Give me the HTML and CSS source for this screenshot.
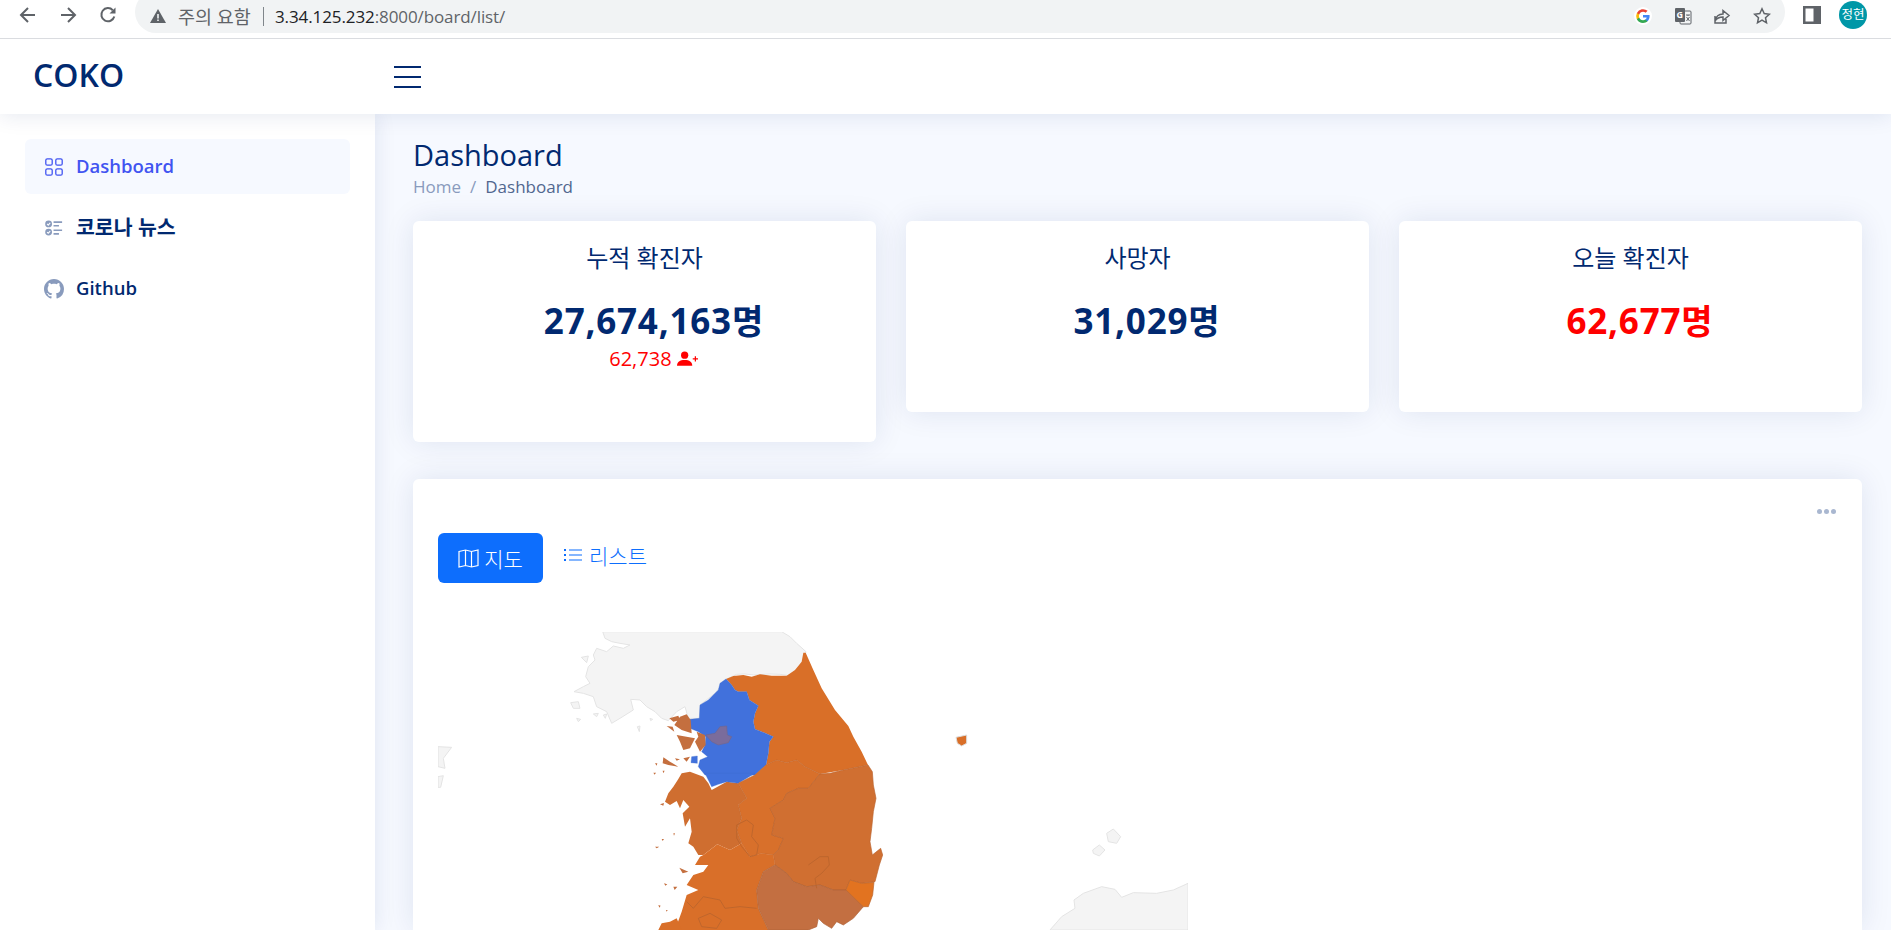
FILE: index.html
```html
<!DOCTYPE html>
<html lang="ko">
<head>
<meta charset="utf-8">
<title>COKO</title>
<link rel="stylesheet" href="styles.css">
</head>
<body>
<div class="browser">
  <div class="nav-icons">
    <svg class="ci" viewBox="0 0 20 20"><path d="M17 10H3.500M10 3l-7 7 7 7"/></svg>
    <svg class="ci" viewBox="0 0 20 20"><path d="M3 10h13.500M10 3l7 7-7 7"/></svg>
    <svg class="ci" viewBox="0 0 20 20"><path d="M16.300 11.500a6.600 6.600 0 1 1-1.500-6.300"/><path class="solid" d="M17.500 2.500v6h-6z"/></svg>
  </div>
  <div class="omnibox">
    <svg class="warn" viewBox="0 0 16 14"><path d="M8 0l8 14H0z"/><path class="warn-mark" d="M7.200 5h1.600v4.500H7.200zM7.200 10.500h1.600V12H7.200z"/></svg>
    <span class="warn-text">주의 요함</span>
    <span class="sep"></span>
    <span class="url"><span class="host">3.34.125.232</span>:8000/board/list/</span>
    <div class="omni-right">
      <svg class="g-logo" viewBox="0 0 18 18"><circle class="g-bg" cx="9" cy="9" r="9"/><path class="g-b" d="M15.600 9.200c0-.5 0-.9-.1-1.300H9v2.500h3.700a3.200 3.200 0 0 1-1.400 2.100v1.700h2.200c1.300-1.200 2.100-3 2.100-5z"/><path class="g-g" d="M9 16c1.900 0 3.400-.6 4.500-1.700l-2.200-1.700c-.6.400-1.400.7-2.300.7-1.800 0-3.300-1.200-3.800-2.800H2.900v1.700A7 7 0 0 0 9 16z"/><path class="g-y" d="M5.200 10.500a4.200 4.200 0 0 1 0-2.900V5.900H2.900a7 7 0 0 0 0 6.300z"/><path class="g-r" d="M9 4.800c1 0 1.900.4 2.600 1l2-2A7 7 0 0 0 2.900 5.900l2.300 1.700C5.700 6 7.200 4.800 9 4.800z"/></svg>
      <svg class="tr" viewBox="0 0 18 18"><rect class="tr-back" x="6" y="4" width="11" height="13" rx="1"/><rect class="tr-front" x="1" y="1" width="10" height="14" rx="1"/><text class="tr-g" x="2.500" y="11">G</text><path class="tr-x" d="M12 8h4M14 8v1M12.500 14l3-4M12.500 10l3 4"/></svg>
      <svg class="ci small" viewBox="0 0 18 18"><path d="M2 9v7h11v-4M2 14c1-5 4-7 8-7V3.500l6 5-6 5V10c-3 0-6 1-8 4z"/></svg>
      <svg class="ci small" viewBox="0 0 18 18"><path d="M9 1.800l2.200 4.800 5.100.6-3.800 3.500 1 5.100L9 13.200 4.500 15.800l1-5.100L1.700 7.200l5.100-.6z"/></svg>
    </div>
  </div>
  <svg class="side-panel" viewBox="0 0 18 18"><path d="M0 0h18v18H0zM2.500 2.500v13h8v-13z"/></svg>
  <div class="avatar">정현</div>
</div>

<header class="topbar">
  <div class="logo">COKO</div>
  <svg class="burger" viewBox="0 0 27 22"><path d="M0 1h27M0 11h27M0 21h27"/></svg>
</header>

<div class="shell">
  <nav class="sidebar">
    <a class="nav-item active">
      <svg class="nav-icon outline" viewBox="0 0 18 18"><rect x=".8" y=".8" width="6.400" height="6.400" rx="1.500"/><rect x="10.800" y=".8" width="6.400" height="6.400" rx="1.500"/><rect x=".8" y="10.800" width="6.400" height="6.400" rx="1.500"/><rect x="10.800" y="10.800" width="6.400" height="6.400" rx="1.500"/></svg>
      <span class="nav-label">Dashboard</span>
    </a>
    <a class="nav-item">
      <svg class="nav-icon checks" viewBox="0 0 20 18"><circle cx="4" cy="4.500" r="3.800"/><circle cx="4" cy="13.500" r="3.800"/><path class="tick" d="M2.300 4.500l1.300 1.300 2.200-2.400M2.300 13.500l1.300 1.300 2.200-2.400"/><path class="bar" d="M9.500 2.500H19M9.500 6.500h6M9.500 11.500H19M9.500 15.500h6"/></svg>
      <span class="nav-label ko">코로나 뉴스</span>
    </a>
    <a class="nav-item">
      <svg class="nav-icon github" viewBox="0 0 16 16"><path d="M8 0C3.580 0 0 3.580 0 8c0 3.540 2.290 6.530 5.470 7.590.4.070.55-.17.55-.38 0-.19-.01-.82-.01-1.490-2.010.37-2.530-.49-2.690-.94-.09-.23-.48-.94-.82-1.130-.28-.15-.68-.52-.01-.53.63-.01 1.080.58 1.230.82.720 1.210 1.870.87 2.330.66.070-.52.280-.87.510-1.070-1.780-.2-3.640-.89-3.640-3.950 0-.87.310-1.590.82-2.150-.08-.2-.36-1.020.08-2.120 0 0 .67-.21 2.200.82.640-.18 1.320-.27 2-.27.680 0 1.360.09 2 .27 1.530-1.040 2.200-.82 2.200-.82.440 1.100.160 1.920.080 2.120.510.56.820 1.270.820 2.150 0 3.070-1.870 3.750-3.650 3.950.290.25.540.73.540 1.480 0 1.070-.01 1.930-.01 2.200 0 .21.150.46.550.38A8.012 8.012 0 0 0 16 8c0-4.420-3.580-8-8-8z"/></svg>
      <span class="nav-label">Github</span>
    </a>
  </nav>

  <main class="main">
    <h1 class="page-title">Dashboard</h1>
    <div class="crumbs"><span class="crumb-home">Home</span><span class="crumb-sep">/</span><span class="crumb-cur">Dashboard</span></div>

    <section class="stats">
      <article class="stat stat-tall">
        <h2 class="stat-title">누적 확진자</h2>
        <div class="stat-value">27,674,163<span class="unit">명</span></div>
        <div class="stat-sub">62,738
          <svg class="person" viewBox="0 0 22 15"><circle cx="8" cy="4" r="3.800"/><path d="M0 15c0-4 3-6 8-6s8 2 8 6z"/><path d="M16.500 7.200h5.500v1.300h-5.500zM18.600 5.100h1.300v5.500h-1.300z"/></svg>
        </div>
      </article>
      <article class="stat">
        <h2 class="stat-title">사망자</h2>
        <div class="stat-value">31,029<span class="unit">명</span></div>
      </article>
      <article class="stat">
        <h2 class="stat-title">오늘 확진자</h2>
        <div class="stat-value red">62,677<span class="unit">명</span></div>
      </article>
    </section>

    <section class="panel">
      <div class="dots"><i></i><i></i><i></i></div>
      <div class="tabs">
        <button class="tab tab-on">
          <svg class="tab-icon" viewBox="0 0 21 19"><path d="M1 2.500L7.500 1l6 1.500L20 1v15.500L13.500 18l-6-1.500L1 18zM7.500 1v15.500M13.500 2.500V18"/></svg>
          지도
        </button>
        <button class="tab">
          <svg class="tab-icon list" viewBox="0 0 18 14"><path d="M5 2h13M5 7h13M5 12h13"/><path class="dot" d="M0 1h2v2H0zM0 6h2v2H0zM0 11h2v2H0z"/></svg>
          리스트
        </button>
      </div>
      <svg class="map" viewBox="438 632 750 298">
        <g transform="translate(420 510) scale(.33333)">
          <path class="land-off" d="M548 365H1085L1110 380L1130 400L1158 425L1145 470L1110 497L1080 493L1050 492L1000 495L975 492L950 493L918 508L885 550L840 585L838 625L805 625L795 590L770 605L745 632L725 625L705 605L680 590L660 570L632 568L640 600L600 625L575 640L560 605L530 590L520 560L490 550L462 545L490 530L510 520L497 500L505 470L525 450L520 435L530 415L560 425L580 408L610 415L630 405L600 400L575 395L555 385Z"/>
          <path class="land-off" d="M452 578L475 575L480 595L460 595ZM484 442L505 438L500 458ZM520 612L535 610L530 620ZM550 615L560 612L556 625ZM470 625L482 628L475 635ZM652 650L660 648L658 665ZM690 625L698 628L692 632ZM54 710L95 712L70 745L75 775L54 770ZM54 800L70 797L62 832H54Z"/>
        </g>
        <g transform="translate(640 620) scale(.33333)">
          <path class="gangwon" d="M258 177L280 168L310 165L335 170L360 163L395 167L440 167L465 150L485 125L490 98L497 98L520 150L545 205L585 270L625 318L640 350L665 395L684 435L610 450L540 462L495 440L470 420L440 428L410 420L378 435L385 400L388 365L400 350L365 335L345 328L340 305L345 280L355 257L328 240L320 215L295 215L285 210L275 195Z"/>
          <path class="gyeonggi" d="M258 177L275 195L285 210L295 215L320 215L328 240L355 257L345 280L340 305L345 328L365 335L400 350L388 365L385 400L378 435L345 465H195L175 440L180 420L203 410L185 395L195 375L197 350L175 335L150 325V298L178 295L180 255L205 240L235 210L240 190Z"/>
          <path class="seoul" d="M197 345L225 340L240 320L260 318L262 345L275 350L265 368L235 375L215 365Z"/>
          <path class="isle" d="M88 295L115 287L120 300L100 305ZM120 290L140 283L152 300L155 340L125 330L103 315ZM170 335L195 345L197 375L180 395L165 365L175 350ZM110 345L165 355L150 385L130 390L120 365ZM80 318L98 320L103 335ZM70 412L90 425L115 440L85 435L68 430ZM105 415L120 418L110 422ZM130 415L150 410L140 425ZM45 430L52 430L50 437ZM40 458L48 458L44 464ZM68 452L74 452L70 460Z"/>
          <path class="gyeonggi" d="M155 410L172 408V430L153 428Z"/>
        </g>
        <g transform="translate(640 775) scale(.33333)">
          <path class="chungnam" d="M75 80L85 55L100 35L115 12L125 -5L150 -10L190 5L205 25L215 45L260 20L295 25L320 70L295 90L305 130L290 165L305 205L270 225L232 208L190 240L175 240L160 215L145 205L155 170L150 130L135 155L128 115L148 95L130 75L120 100L110 78L90 90Z"/>
          <path class="gyeonggi" d="M195 -5L205 15L215 35L235 28L260 20L295 25L345 -5Z"/>
          <path class="chungbuk" d="M295 25L345 0L378 -30L410 -45L440 -37L470 -45L495 -25L540 -3L505 40L475 40L440 55L430 75L390 100L405 130L395 180L430 190L415 225L400 240L365 235L330 245L305 205L290 165L305 130L295 90L320 70Z"/>
          <path class="gyeongbuk" d="M540 -3L570 -5L610 -15L684 -30L697 -10L700 30L708 70L700 110L695 160L690 200L697 240L722 220L728 240L718 270L705 320L665 325L630 315L618 345L580 345L540 330L500 335L460 320L440 295L405 270L400 240L415 225L430 190L395 180L405 130L390 100L430 75L440 55L475 40L505 40Z"/>
          <path class="jeolla" d="M190 240L232 208L270 225L305 205L330 245L365 235L400 240L405 270L370 290L350 345L355 400L385 465H105L125 410L140 360L175 345L140 330L160 300L190 290L205 270L165 270L180 245Z"/>
          <path class="gyeongnam" d="M405 270L440 295L460 320L500 335L540 330L580 345L618 345L660 385L670 395L640 430L610 450L590 440L575 460L550 445L535 430L530 455L505 465H385L355 400L350 345L370 290Z"/>
          <path class="ulsan" d="M630 315L665 325L702 322L698 360L685 395L670 395L618 345Z"/>
          <path class="jeolla" d="M55 465L65 445L90 440L110 430L125 465Z"/>
          <path class="isle" d="M60 88L72 84L70 92ZM100 175L105 175L102 182ZM65 192L72 192L68 198ZM45 215L58 215L50 220ZM118 278L145 290L128 295ZM72 325L82 328L76 332ZM100 335L112 335L104 345ZM55 390L62 392L58 398ZM78 405L83 405L80 410Z"/>
          <path class="seam" d="M140 380L160 400L190 365L240 375L255 400L300 395L350 400M175 430L210 415L245 435L230 460L185 455ZM290 150L320 135L340 150L335 185L355 210L350 240L330 245L305 215L290 190ZM505 270L540 245L565 245L568 270L545 295L525 310L530 340"/>
        </g>
        <g transform="translate(820 610) scale(.33333)">
          <path class="ulleung" d="M408 382L440 375L440 400L425 408L412 400Z"/>
          <path class="land-off" d="M860 670L880 657L902 680L890 700L865 695ZM818 720L838 705L855 720L838 738L820 730ZM690 960L725 920L765 895L762 870L790 850L845 830L885 838L905 862L940 848L1010 850L1060 840L1104 820V960Z"/>
        </g>
      </svg>
    </section>
  </main>
</div>
</body>
</html>
```

FILE: styles.css
```css
* { box-sizing: border-box; }
html, body { margin: 0; height: 930px; overflow: hidden; }
body {
  display: flex;
  flex-direction: column;
  background: #fff;
  font-family: "Open Sans", "Noto Sans CJK KR", sans-serif;
  color: #012970;
}

/* browser chrome */
.browser {
  display: flex;
  align-items: flex-start;
  height: 39px;
  flex: none;
  overflow: hidden;
  border-bottom: 1px solid #dadce0;
  background: #fff;
  position: relative;
  z-index: 3;
}
.nav-icons { display: flex; gap: 20px; padding: 5px 0 0 18px; width: 135px; flex: none; }
.ci { width: 20px; height: 20px; fill: none; stroke: #5f6368; stroke-width: 2; }
.ci .solid { fill: #5f6368; stroke: none; }
.ci.small { width: 18px; height: 18px; stroke-width: 1.500; }
.omnibox {
  display: flex;
  align-items: center;
  width: 1650px;
  height: 42px;
  margin-top: -9px;
  padding: 8px 14px 0 15px;
  border-radius: 21px;
  background: #f1f3f4;
  flex: none;
  font-size: 17px;
  color: #5f6368;
}
.warn { width: 16px; height: 14px; fill: #5f6368; flex: none; }
.warn .warn-mark { fill: #f1f3f4; }
.warn-text { margin-left: 12px; width: 82px; font-size: 18.500px; white-space: nowrap; }
.sep { width: 1px; height: 19px; margin: 0 11px 0 3px; background: #80868b; }
.url { letter-spacing: -.1px; }
.host { color: #202124; }
.omni-right { display: flex; align-items: center; gap: 21.700px; margin-left: auto; }
.g-logo { width: 18px; height: 18px; }
.g-bg { fill: #fff; }
.g-b { fill: #4285f4; }
.g-g { fill: #34a853; }
.g-y { fill: #fbbc05; }
.g-r { fill: #ea4335; }
.tr { width: 18px; height: 18px; }
.tr-back { fill: #f1f3f4; stroke: #5f6368; }
.tr-front { fill: #5f6368; }
.tr-g { fill: #fff; font-size: 9px; font-weight: 700; }
.tr-x { fill: none; stroke: #5f6368; }
.side-panel { width: 18px; height: 18px; margin: 6px 0 0 18px; fill: #5f6368; flex: none; }
.avatar {
  width: 28px;
  height: 28px;
  margin: 1px 0 0 18px;
  border-radius: 50%;
  background: #0097a7;
  color: #fff;
  font-size: 12.500px;
  line-height: 28px;
  text-align: center;
  flex: none;
}

/* header */
.topbar {
  display: flex;
  align-items: center;
  height: 75px;
  flex: none;
  background: #fff;
  box-shadow: 0 2px 20px rgba(1, 41, 112, .1);
  position: relative;
  z-index: 2;
}
.logo { width: 394px; padding: 0 0 4px 33px; font-size: 32px; font-weight: 600; line-height: 1; }
.burger { width: 27px; height: 22px; fill: none; stroke: #012970; stroke-width: 2; }

/* shell */
.shell { display: flex; flex: 1; min-height: 0; }
.sidebar {
  display: flex;
  flex-direction: column;
  gap: 6px;
  width: 375px;
  flex: none;
  padding: 25px;
  background: #fff;
  box-shadow: 0 0 20px rgba(1, 41, 112, .1);
  position: relative;
  z-index: 1;
}
.nav-item {
  display: flex;
  align-items: center;
  gap: 13px;
  height: 55px;
  padding-left: 20px;
  border-radius: 6px;
  font-size: 18.500px;
  font-weight: 600;
  color: #012970;
}
.nav-item.active { background: #f6f9ff; color: #4154f1; }
.nav-label { padding-bottom: 2px; }
.nav-label.ko { padding-bottom: 3px; font-size: 20.500px; font-weight: 700; }
.nav-icon { width: 18px; height: 18px; flex: none; }
.outline { fill: none; stroke: #4154f1; stroke-width: 1.300; }
.checks { fill: #899bbd; }
.checks .tick { fill: none; stroke: #fff; stroke-width: 1.200; }
.checks .bar { fill: none; stroke: #899bbd; stroke-width: 1.800; }
.github { width: 20px; height: 20px; margin-left: -1px; margin-right: -1px; fill: #899bbd; }

/* main */
.main { flex: 1; min-width: 0; padding: 24px 29px 0 38px; background: #f6f9ff; }
.page-title { margin: 0; font-size: 29px; font-weight: 500; line-height: 34px; color: #012970; }
.crumbs { display: flex; gap: 9px; margin-top: 3px; font-size: 17px; line-height: 24px; }
.crumb-home, .crumb-sep { color: #899bbd; }
.crumb-cur { color: #51678f; }
.stats { display: flex; align-items: flex-start; gap: 30px; margin-top: 22px; }
.stat {
  flex: 1;
  height: 191px;
  padding-top: 21px;
  border-radius: 6px;
  background: #fff;
  box-shadow: 0 0 30px rgba(1, 41, 112, .1);
  text-align: center;
}
.stat-tall { height: 221px; }
.stat-title { margin: 0; font-size: 24px; font-weight: 400; line-height: 32px; color: #012970; }
.stat-value { margin-top: 26px; padding-left: 18px; font-size: 35px; font-weight: 700; line-height: 42px; letter-spacing: .8px; color: #012970; }
.stat-value.red, .stat-sub { color: #f00; }
.stat-value .unit { font-size: 34px; letter-spacing: 0; }
.stat-sub { margin-top: 4px; padding-left: 18px; font-size: 20px; line-height: 26px; }
.person { width: 21px; height: 15px; fill: #f00; }

.panel {
  position: relative;
  margin-top: 37px;
  height: 451px;
  padding: 54px 25px 0;
  border-radius: 6px 6px 0 0;
  background: #fff;
  box-shadow: 0 0 30px rgba(1, 41, 112, .1);
}
.dots { position: absolute; top: 30px; right: 26px; display: flex; gap: 2px; }
.dots i { width: 5px; height: 5px; border-radius: 50%; background: #a9b7d0; }
.tabs { display: flex; gap: 8px; }
.tab {
  display: flex;
  align-items: center;
  justify-content: center;
  gap: 5px;
  height: 50px;
  padding: 0 12px;
  border: 0;
  border-radius: 6px;
  background: none;
  font: inherit;
  font-size: 21px;
  font-weight: 300;
  color: #0d6efd;
}
.tab-on { width: 105px; background: #0d6efd; color: #fff; }
.tab:not(.tab-on) { height: 44px; gap: 7px; padding-left: 13px; }
.tab-icon { width: 21px; height: 19px; fill: none; stroke: currentColor; stroke-width: 1.200; }
.tab-icon.list { width: 18px; height: 14px; }
.tab-icon .dot { fill: currentColor; stroke: none; }
.map { display: block; width: 750px; height: 298px; margin-top: 49px; }
.land-off { fill: #f4f4f4; stroke: #e4e4e4; stroke-width: 3; }
.gangwon { fill: #d96f28; }
.gyeonggi { fill: #4171dc; stroke: #3c6ace; stroke-width: 1; }
.seoul { fill: #7a6c9c; stroke: #6f6690; stroke-width: 2; }
.isle { fill: #c46f3f; }
.chungnam { fill: #cf6e30; }
.chungbuk { fill: #d8702b; stroke: #bf652c; stroke-width: 2; }
.gyeongbuk { fill: #d06f31; stroke: #b9642f; stroke-width: 2; }
.jeolla { fill: #d96f29; }
.gyeongnam { fill: #c36f41; stroke: #ae6238; stroke-width: 2; }
.ulsan { fill: #e27320; stroke: #b8642d; stroke-width: 2; }
.seam { fill: none; stroke: #b9642c; stroke-width: 2.500; }
.ulleung { fill: #d96f28; stroke: #ddd; stroke-width: 3; }
```
